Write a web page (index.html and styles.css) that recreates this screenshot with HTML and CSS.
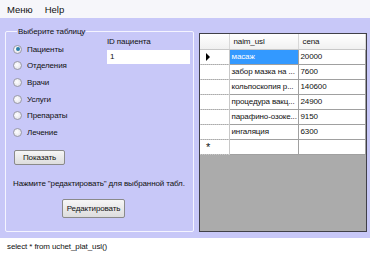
FILE: index.html
```html
<!DOCTYPE html>
<html>
<head>
<meta charset="utf-8">
<link rel="stylesheet" href="styles.css">
</head>
<body>
<div class="menubar"><span class="menu-item">Меню</span><span class="menu-item">Help</span></div>
<div class="main">
  <fieldset class="group">
    <legend class="legend">Выберите таблицу</legend>
    <div class="top">
      <div class="radios">
        <div class="radio-row"><span class="radio checked"></span>Пациенты</div>
        <div class="radio-row"><span class="radio"></span>Отделения</div>
        <div class="radio-row"><span class="radio"></span>Врачи</div>
        <div class="radio-row"><span class="radio"></span>Услуги</div>
        <div class="radio-row"><span class="radio"></span>Препараты</div>
        <div class="radio-row"><span class="radio"></span>Лечение</div>
      </div>
      <div class="idbox">
        <div class="idlabel">ID пациента</div>
        <div class="input">1</div>
      </div>
    </div>
    <div class="btn btn-show">Показать</div>
    <div class="hint">Нажмите "редактировать" для выбранной табл.</div>
    <div class="btn-wrap"><div class="btn btn-edit">Редактировать</div></div>
  </fieldset>
  <div class="grid">
    <table class="table">
      <tr class="head"><th class="rh"></th><th class="c1">naim_usl</th><th class="c2">cena</th></tr>
      <tr><td class="rh"><span class="arrow"></span></td><td class="sel">масаж</td><td>20000</td></tr>
      <tr><td class="rh"></td><td>забор мазка на ...</td><td>7600</td></tr>
      <tr><td class="rh"></td><td>кольпоскопия р...</td><td>140600</td></tr>
      <tr><td class="rh"></td><td>процедура вакц...</td><td>24900</td></tr>
      <tr><td class="rh"></td><td>парафино-озоке...</td><td>9150</td></tr>
      <tr><td class="rh"></td><td>ингаляция</td><td>6300</td></tr>
      <tr><td class="rh star">*</td><td></td><td></td></tr>
    </table>
  </div>
</div>
<div class="status">select * from uchet_plat_usl()</div>
</body>
</html>
```
FILE: styles.css
```css
html, body {
  margin: 0;
  padding: 0;
}
body {
  width: 370px;
  height: 256px;
  overflow: hidden;
  font-family: "Liberation Sans", Arial, sans-serif;
  font-size: 8px;
  letter-spacing: -0.12px;
  color: #111;
  background: #fff;
}
.menubar {
  height: 18px;
  background: #f6f6fa;
  display: flex;
  align-items: center;
  padding-left: 7px;
  gap: 12px;
  font-size: 9.5px;
  letter-spacing: 0;
}
.main {
  height: 220px;
  box-sizing: border-box;
  background: #c8c8f8;
  display: flex;
  align-items: flex-start;
  padding: 9px 0 0 5px;
}
.group {
  margin: 0;
  min-width: 0;
  width: 189px;
  height: 205px;
  box-sizing: border-box;
  border: 1px solid #f4f4ff;
  border-radius: 2px;
  padding: 0 0 0 7px;
  flex: none;
}
.legend {
  padding: 0 1px;
  margin-left: 4px;
}
.top {
  display: flex;
}
.radios {
  width: 94px;
  padding-top: 5px;
}
.radio-row {
  height: 16.6px;
  display: flex;
  align-items: center;
  white-space: nowrap;
}
.radio {
  width: 9px;
  height: 9px;
  border-radius: 50%;
  border: 1px solid #9a9aa6;
  background: radial-gradient(circle at 40% 40%, #fff, #dcdce4);
  margin-right: 5px;
  position: relative;
  box-sizing: border-box;
}
.radio.checked::after {
  content: "";
  position: absolute;
  left: 1.5px;
  top: 1.5px;
  width: 4px;
  height: 4px;
  border-radius: 50%;
  background: #2a7fa8;
}
.idlabel {
  height: 14px;
  line-height: 12px;
}
.input {
  width: 83px;
  height: 14px;
  box-sizing: border-box;
  background: #fff;
  padding-left: 3px;
  line-height: 14px;
}
.btn {
  box-sizing: border-box;
  border: 1px solid #8a8a8a;
  border-radius: 2px;
  background: linear-gradient(#f6f6f6, #dddddd);
  display: flex;
  align-items: center;
  justify-content: center;
  white-space: nowrap;
}
.btn-show {
  width: 51px;
  height: 15px;
  margin-top: 9px;
  margin-left: 1px;
}
.hint {
  margin-top: 13px;
  height: 12px;
  line-height: 12px;
  white-space: nowrap;
}
.btn-wrap {
  margin-top: 9px;
  padding-left: 49px;
}
.btn-edit {
  width: 63px;
  height: 19px;
}
.grid {
  margin-left: 5px;
  margin-top: 6px;
  width: 168px;
  height: 199px;
  box-sizing: border-box;
  border: 1px solid #404048;
  background: #ababab;
  flex: none;
}
.table {
  border-collapse: collapse;
  table-layout: fixed;
  width: 166px;
}
.table th, .table td {
  height: 15px;
  box-sizing: border-box;
  padding: 0 0 0 2px;
  text-align: left;
  font-weight: normal;
  white-space: nowrap;
  overflow: hidden;
  background: #fff;
  border-right: 1px solid #a0a0a0;
  border-bottom: 1px solid #a0a0a0;
}
.table .rh {
  width: 29px;
  border-right: 1px solid #c8c8c8;
  border-bottom: 1px dotted #c8c8c8;
  padding: 0;
  position: relative;
}
.table .c1 {
  width: 69px;
}
.table .head th {
  background: linear-gradient(#ffffff, #f0f0f0);
  border-bottom: 1px solid #c8c8c8;
  border-right: 1px solid #d8d8d8;
  padding-left: 4px;
}
.table td.sel {
  background: #3399ff;
  color: #fff;
}
.arrow {
  position: absolute;
  left: 6px;
  top: 3px;
  width: 0;
  height: 0;
  border-top: 4px solid transparent;
  border-bottom: 4px solid transparent;
  border-left: 4px solid #000;
}
.table td.star {
  padding-left: 6px;
  font-size: 11px;
  line-height: 14px;
}
.status {
  height: 18px;
  line-height: 18px;
  padding-left: 7px;
  background: #fff;
}
```
